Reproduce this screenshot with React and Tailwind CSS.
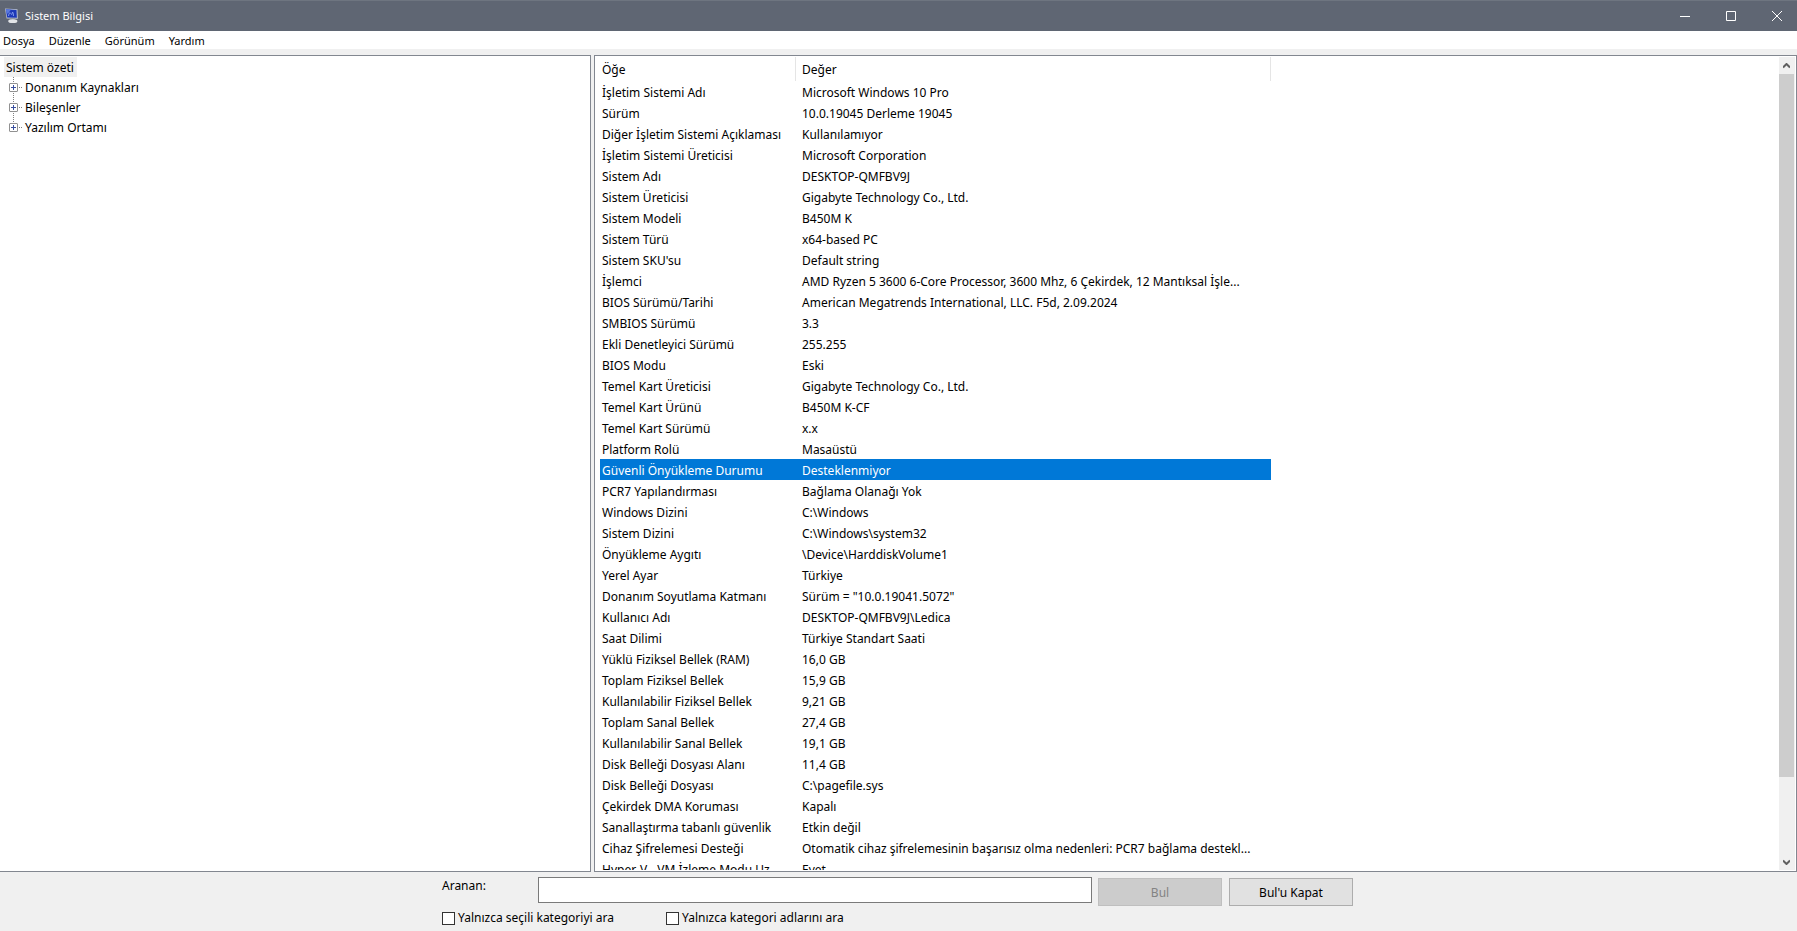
const ROWS = [
  ["İşletim Sistemi Adı", "Microsoft Windows 10 Pro"],
  ["Sürüm", "10.0.19045 Derleme 19045"],
  ["Diğer İşletim Sistemi Açıklaması", "Kullanılamıyor"],
  ["İşletim Sistemi Üreticisi", "Microsoft Corporation"],
  ["Sistem Adı", "DESKTOP-QMFBV9J"],
  ["Sistem Üreticisi", "Gigabyte Technology Co., Ltd."],
  ["Sistem Modeli", "B450M K"],
  ["Sistem Türü", "x64-based PC"],
  ["Sistem SKU'su", "Default string"],
  ["İşlemci", "AMD Ryzen 5 3600 6-Core Processor, 3600 Mhz, 6 Çekirdek, 12 Mantıksal İşle..."],
  ["BIOS Sürümü/Tarihi", "American Megatrends International, LLC. F5d, 2.09.2024"],
  ["SMBIOS Sürümü", "3.3"],
  ["Ekli Denetleyici Sürümü", "255.255"],
  ["BIOS Modu", "Eski"],
  ["Temel Kart Üreticisi", "Gigabyte Technology Co., Ltd."],
  ["Temel Kart Ürünü", "B450M K-CF"],
  ["Temel Kart Sürümü", "x.x"],
  ["Platform Rolü", "Masaüstü"],
  ["Güvenli Önyükleme Durumu", "Desteklenmiyor"],
  ["PCR7 Yapılandırması", "Bağlama Olanağı Yok"],
  ["Windows Dizini", "C:\\Windows"],
  ["Sistem Dizini", "C:\\Windows\\system32"],
  ["Önyükleme Aygıtı", "\\Device\\HarddiskVolume1"],
  ["Yerel Ayar", "Türkiye"],
  ["Donanım Soyutlama Katmanı", 'Sürüm = "10.0.19041.5072"'],
  ["Kullanıcı Adı", "DESKTOP-QMFBV9J\\Ledica"],
  ["Saat Dilimi", "Türkiye Standart Saati"],
  ["Yüklü Fiziksel Bellek (RAM)", "16,0 GB"],
  ["Toplam Fiziksel Bellek", "15,9 GB"],
  ["Kullanılabilir Fiziksel Bellek", "9,21 GB"],
  ["Toplam Sanal Bellek", "27,4 GB"],
  ["Kullanılabilir Sanal Bellek", "19,1 GB"],
  ["Disk Belleği Dosyası Alanı", "11,4 GB"],
  ["Disk Belleği Dosyası", "C:\\pagefile.sys"],
  ["Çekirdek DMA Koruması", "Kapalı"],
  ["Sanallaştırma tabanlı güvenlik", "Etkin değil"],
  ["Cihaz Şifrelemesi Desteği", "Otomatik cihaz şifrelemesinin başarısız olma nedenleri: PCR7 bağlama destekl..."],
  ["Hyper-V - VM İzleme Modu Uz...", "Evet"],
];
const SELECTED = 18;
const MENUS = ["Dosya", "Düzenle", "Görünüm", "Yardım"];
const BRANCHES = ["Donanım Kaynakları", "Bileşenler", "Yazılım Ortamı"];

function AppIcon() {
  return (
    <svg width="16" height="16" viewBox="0 0 16 16" aria-hidden="true">
      <path d="M1 0.5 13.5 1.3 13.9 10.8 2.6 10.4Z" fill="#b9c1cf" />
      <path d="M1.8 1.2 12.5 2 12.9 9.8 3.2 9.4Z" fill="#1c38b8" />
      <path d="M1.8 1.2 7 1.6 4.5 5 2.6 6Z" fill="#5a78dc" />
      <path d="M4.5 8 Q5.5 3 6.8 5.5 T8.5 4 Q9.5 4.5 9.5 8" stroke="#7f98ea" fill="none" />
      <path d="M6 10.6h5l.5 2h-6Z" fill="#868d99" />
      <ellipse cx="8.8" cy="13.2" rx="4.6" ry="1.9" fill="#e2e4e8" />
    </svg>
  );
}

function TitleBar() {
  return (
    <header className="flex h-[31px] shrink-0 items-center border-t border-[#6e7580] bg-[#5f6673] text-white">
      <div className="flex flex-1 items-center gap-[5px] pl-1">
        <AppIcon />
        <h1 className="text-[11px] leading-4">Sistem Bilgisi</h1>
      </div>
      <button type="button" aria-label="Simge durumuna küçült" className="flex h-full w-[46px] items-center justify-center">
        <svg width="10" height="10" viewBox="0 0 10 10"><path d="M0 5.5h10" stroke="#fff" /></svg>
      </button>
      <button type="button" aria-label="Ekranı kapla" className="flex h-full w-[46px] items-center justify-center">
        <svg width="10" height="10" viewBox="0 0 10 10"><path d="M.5.5h9v9h-9z" stroke="#fff" fill="none" /></svg>
      </button>
      <button type="button" aria-label="Kapat" className="flex h-full w-[43px] items-center justify-center pl-[3px]">
        <svg width="10" height="10" viewBox="0 0 10 10"><path d="m0 0 10 10M10 0 0 10" stroke="#fff" fill="none" /></svg>
      </button>
    </header>
  );
}

function Tree() {
  return (
    <nav aria-label="Kategoriler" className="w-[591px] shrink-0 border border-l-0 border-[#828790] bg-white pl-1 pt-px">
      <a href="#ozet" className="block h-5 w-fit bg-[#f0f0f0] pl-[2px] pr-[3px] leading-[22px]">Sistem özeti</a>
      <ul>
        {BRANCHES.map((b, i) => (
          <li key={b} className="flex h-5">
            <button type="button" aria-label={b + " genişlet"} className="mr-[3px] h-5 w-[18px]">
              <svg width="18" height="20" viewBox="0 0 18 20">
                <path d={i < 2 ? "M9.5 0v20" : "M9.5 0v10"} stroke="#808080" strokeDasharray="1 1" />
                <path d="M15 10.5h3" stroke="#808080" strokeDasharray="1 1" />
                <rect x="5.5" y="6.5" width="8" height="8" rx="0.5" fill="#fff" stroke="#919191" />
                <path d="M7 10.5h5M9.5 8v5" stroke="#3a4f9c" />
              </svg>
            </button>
            <span className="leading-[22px]">{b}</span>
          </li>
        ))}
      </ul>
    </nav>
  );
}

function Details() {
  return (
    <main className="flex min-w-0 flex-1 overflow-hidden border border-[#828790] bg-white p-px">
      <div className="min-w-0 flex-1 overflow-hidden pl-1">
        <table className="w-[671px] table-fixed border-separate border-spacing-0 text-left">
          <colgroup>
            <col className="w-[196px]" />
            <col />
          </colgroup>
          <thead>
            <tr className="h-6">
              <th className="border-r border-[#e5e5e5] p-0 pl-[2px] pt-[2px] font-normal">Öğe</th>
              <th className="border-r border-[#e5e5e5] p-0 pl-[6px] pt-[2px] font-normal">Değer</th>
            </tr>
          </thead>
          <tbody className="leading-[18px]">
            {ROWS.map(([k, v], i) => (
              <tr key={k} className={i === SELECTED ? "h-[21px] bg-[#0078d7] text-white" : "h-[21px]"}>
                <td className="whitespace-nowrap p-0 pl-[2px] pt-[3px]">{k}</td>
                <td className="whitespace-nowrap p-0 pl-[6px] pt-[3px]">{v}</td>
              </tr>
            ))}
          </tbody>
        </table>
      </div>
      <div className="flex w-4 shrink-0 flex-col bg-[#f0f0f0]">
        <button type="button" aria-label="Yukarı kaydır" className="flex h-[17px] w-[15px] shrink-0 items-center justify-center">
          <svg width="7" height="6" viewBox="0 0 7 6"><path d="M0 4.5 3.5 1 7 4.5" stroke="#606060" strokeWidth="2" fill="none" /></svg>
        </button>
        <div className="flex flex-1 flex-col">
          <div className="w-[15px] grow-[37] bg-[#cdcdcd]" />
          <div className="grow-[4]" />
        </div>
        <button type="button" aria-label="Aşağı kaydır" className="flex h-[17px] w-[15px] shrink-0 items-center justify-center">
          <svg width="7" height="6" viewBox="0 0 7 6"><path d="M0 1.5 3.5 5 7 1.5" stroke="#606060" strokeWidth="2" fill="none" /></svg>
        </button>
      </div>
    </main>
  );
}

function Check({ label }) {
  return (
    <label className="flex items-center gap-[3px]">
      <input type="checkbox" className="size-[13px] appearance-none border border-[#333] bg-white checked:bg-[#0078d7]" />
      {label}
    </label>
  );
}

function FindBar() {
  return (
    <form className="flex h-[59px] shrink-0 justify-center pr-[2px] pt-[5px]">
      <div className="w-[911px]">
        <div className="flex h-[30px]">
          <label htmlFor="find" className="w-24 leading-[18px]">Aranan:</label>
          <input id="find" type="text" className="h-[26px] min-w-0 flex-1 border border-[#7a7a7a] bg-white px-1 outline-none" />
          <button type="button" disabled className="ml-[6px] mt-px h-7 w-[124px] border border-[#bfbfbf] bg-[#cccccc] pt-[2px] text-[#838383]">Bul</button>
          <button type="button" className="ml-[7px] mt-px h-7 w-[124px] border border-[#adadad] bg-[#e1e1e1] pt-[2px]">Bul'u Kapat</button>
        </div>
        <div className="flex pt-px">
          <div className="w-[224px]"><Check label="Yalnızca seçili kategoriyi ara" /></div>
          <Check label="Yalnızca kategori adlarını ara" />
        </div>
      </div>
    </form>
  );
}

export default function App() {
  return (
    <div className="flex h-screen flex-col overflow-hidden bg-[#f0f0f0] font-['Noto_Sans','Open_Sans',sans-serif] text-[12px] leading-5 text-black">
      <TitleBar />
      <div role="menubar" className="flex h-[18px] shrink-0 gap-[14px] bg-white pl-[3px]">
        {MENUS.map((m) => (
          <button key={m} type="button" role="menuitem" className="text-[11px] leading-5">{m}</button>
        ))}
      </div>
      <div className="flex min-h-0 flex-1 gap-[3px] pt-[6px]">
        <Tree />
        <Details />
      </div>
      <FindBar />
    </div>
  );
}
